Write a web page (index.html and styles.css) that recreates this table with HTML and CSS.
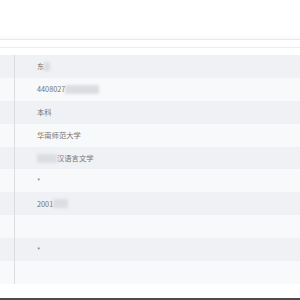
FILE: index.html
```html
<!DOCTYPE html>
<html lang="zh">
<head>
<meta charset="utf-8">
<link rel="stylesheet" href="styles.css">
</head>
<body>
<div class="page">
  <div class="topbar"></div>
  <div class="subbar"></div>
  <div class="rows">
    <div class="row odd"><div class="label"></div><div class="value">东<span class="mask" style="width:6px"></span></div></div>
    <div class="row even"><div class="label"></div><div class="value">4408027<span class="mask" style="width:34px"></span></div></div>
    <div class="row odd"><div class="label"></div><div class="value">本科</div></div>
    <div class="row even"><div class="label"></div><div class="value">华南师范大学</div></div>
    <div class="row odd"><div class="label"></div><div class="value"><span class="mask" style="width:20px"></span>汉语言文学</div></div>
    <div class="row even"><div class="label"></div><div class="value">*</div></div>
    <div class="row odd"><div class="label"></div><div class="value">2001<span class="mask" style="width:15px"></span></div></div>
    <div class="row even"><div class="label"></div><div class="value"></div></div>
    <div class="row odd"><div class="label"></div><div class="value">*</div></div>
    <div class="row even"><div class="label"></div><div class="value"></div></div>
  </div>
  <div class="footer"></div>
</div>
</body>
</html>
```
FILE: styles.css
```css
html, body {
  margin: 0;
  padding: 0;
  background: #ffffff;
}
.page {
  width: 300px;
  height: 300px;
  display: flex;
  flex-direction: column;
  font-family: "Noto Sans CJK SC", "Noto Sans", sans-serif;
  font-size: 7.3px;
  color: #737373;
}
.topbar {
  height: 39px;
  border-bottom: 1px solid #e9e9e9;
  box-shadow: inset 0 -4px 4px -3px #f6f6f6;
}
.subbar {
  height: 7px;
  border-bottom: 1px solid #ededed;
  margin-bottom: 7px;
}
.rows {
  display: flex;
  flex-direction: column;
}
.row {
  display: grid;
  grid-template-columns: 15px 1fr;
  height: 22.9px;
}
.row.odd { background: #eff1f5; }
.row.even { background: #f8f9fb; }
.label {
  border-right: 1px solid #dcdde0;
}
.value {
  display: flex;
  align-items: center;
  padding-left: 22px;
  white-space: nowrap;
}
.mask {
  display: inline-block;
  height: 9px;
  background: #dcdde0;
  filter: blur(1.5px);
}
.footer {
  margin-top: auto;
  height: 2px;
  background: #4b4b4b;
}
```
